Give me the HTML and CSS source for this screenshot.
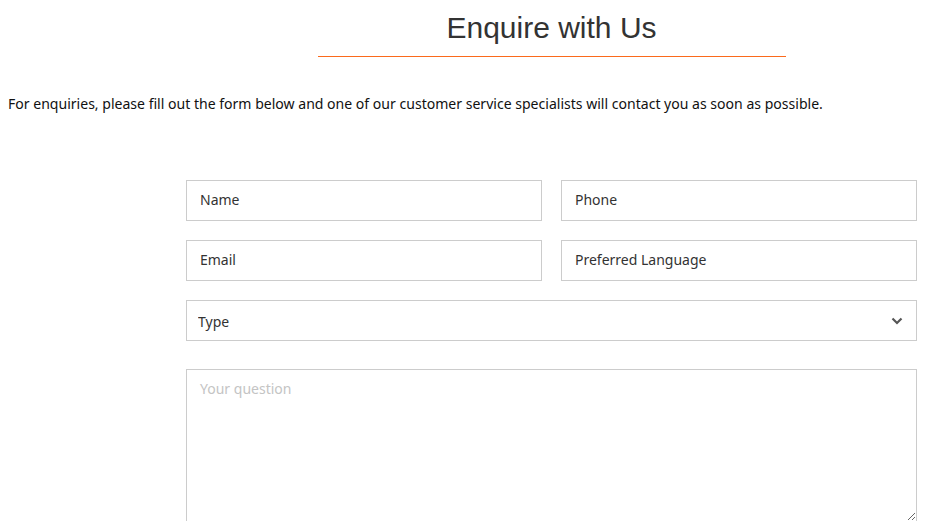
FILE: index.html
```html
<!DOCTYPE html>
<html lang="en">
<head>
<meta charset="utf-8">
<title>Enquire with Us</title>
<link rel="stylesheet" href="styles.css">
</head>
<body>
<div class="page">
  <header class="title-wrap">
    <h1 class="title">Enquire with Us</h1>
    <div class="title-rule"></div>
  </header>
  <p class="intro">For enquiries, please fill out the form below and one of our customer service specialists will contact you as soon as possible.</p>
  <form class="form">
    <div class="row two">
      <input class="field" type="text" placeholder="Name">
      <input class="field" type="text" placeholder="Phone">
    </div>
    <div class="row two">
      <input class="field" type="text" placeholder="Email">
      <input class="field" type="text" placeholder="Preferred Language">
    </div>
    <div class="row">
      <div class="select-wrap">
        <select class="field select">
          <option>Type</option>
        </select>
        <svg class="chev" width="12" height="8" viewBox="0 0 12 8"><path d="M1.5 1.5 L6 6 L10.5 1.5" fill="none" stroke="#555" stroke-width="2.2"/></svg>
      </div>
    </div>
    <div class="row">
      <textarea class="field area" placeholder="Your question"></textarea>
    </div>
  </form>
</div>
</body>
</html>
```
FILE: styles.css
```css
html, body {
  margin: 0;
  padding: 0;
  background: #fff;
}
body {
  font-family: "Noto Sans", "Open Sans", sans-serif;
  color: #111;
  overflow: hidden;
}
.title-wrap {
  margin-left: 186px;
  width: 731px;
  display: flex;
  flex-direction: column;
  align-items: center;
  padding-top: 10px;
}
.title {
  margin: 0;
  font-family: "Liberation Sans", Arial, sans-serif;
  font-weight: normal;
  font-size: 30px;
  line-height: 36px;
  color: #333;
}
.title-rule {
  width: 468px;
  height: 0;
  border-top: 1px solid #fb6a1c;
  margin-top: 10px;
}
.intro {
  margin: 37px 0 0 8px;
  font-size: 14.05px;
  line-height: 20px;
  color: #111;
}
.form {
  margin: 66px 0 0 186px;
  width: 731px;
  display: flex;
  flex-direction: column;
  gap: 19px;
}
.row.two {
  display: grid;
  grid-template-columns: 1fr 1fr;
  gap: 19px;
}
.field {
  box-sizing: border-box;
  width: 100%;
  height: 41px;
  border: 1px solid #ccc;
  border-radius: 0;
  padding: 0 13px 3px;
  font-family: "Noto Sans", "Open Sans", sans-serif;
  font-size: 14px;
  color: #333;
  background: #fff;
  outline: none;
}
.field::placeholder {
  color: #333;
  opacity: 1;
}
.select-wrap {
  position: relative;
}
.select {
  appearance: none;
  -webkit-appearance: none;
  padding: 2px 11px 0;
}
.chev {
  position: absolute;
  right: 14px;
  top: 17px;
  pointer-events: none;
}
.area {
  display: block;
  height: 153px;
  margin-top: 9px;
  padding: 9px 13px;
  resize: vertical;
}
.area::placeholder {
  color: #c4c4c4;
}
```
